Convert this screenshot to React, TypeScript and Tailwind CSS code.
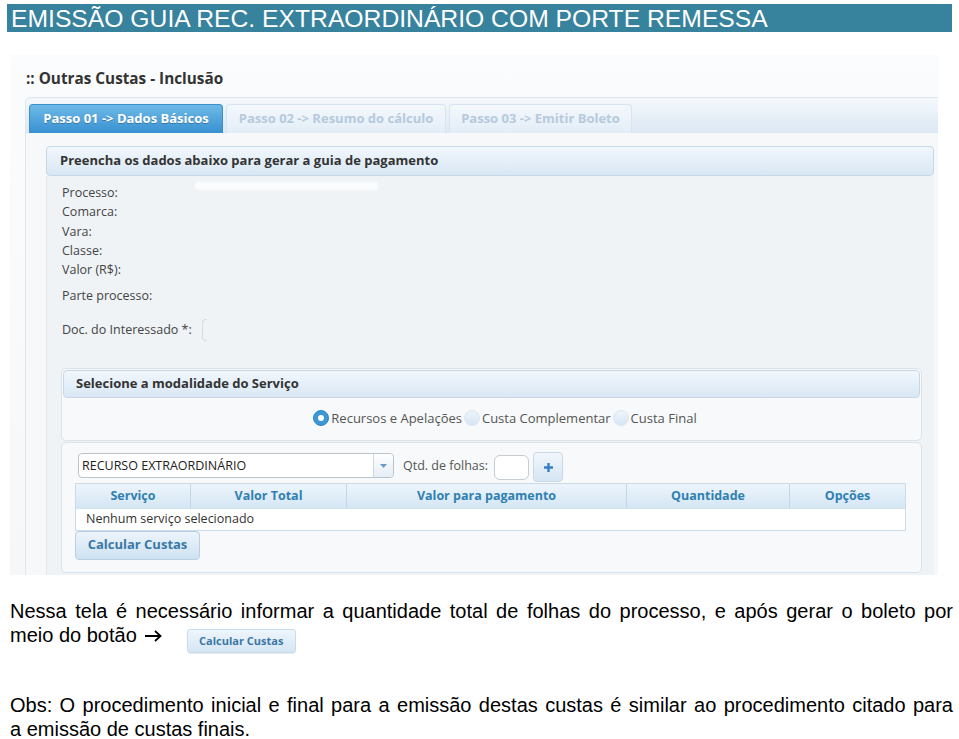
import React from "react";

const labels = ["Comarca:", "Vara:", "Classe:", "Valor (R$):"];

function Radio({ checked, label }: { checked?: boolean; label: string }) {
  return (
    <label className="flex items-center">
      {checked ? (
        <span className="w-[16px] h-[16px] rounded-full bg-[#3c97d6] flex items-center justify-center border border-[#2f86c6]">
          <span className="w-[6px] h-[6px] rounded-full bg-white" />
        </span>
      ) : (
        <span className="w-[16px] h-[16px] rounded-full bg-gradient-to-b from-[#eef5fb] to-[#d6e6f4] border border-[#dde8f1]" />
      )}
      <span className="ml-[2px] mr-[2px] text-[13px] text-[#555]">{label}</span>
    </label>
  );
}

export default function App() {
  return (
    <div className="w-[959px] h-[739px] overflow-hidden bg-white font-['Liberation_Sans',Arial,sans-serif]">
      <div className="mx-[7px] mt-[4px] h-[28px] bg-[#37829c] pl-[4px] text-white text-[24.7px] leading-[29px] whitespace-nowrap">
        EMISSÃO GUIA REC. EXTRAORDINÁRIO COM PORTE REMESSA
      </div>

      {/* captura da tela do sistema */}
      <div className="ml-[10px] mt-[23px] w-[928px] h-[520px] flex flex-col bg-gradient-to-b from-[#fbfcfd] to-[#f5f7f9] font-['Open_Sans',sans-serif]">
        <div className="pl-[16px] pt-[14px] h-[42px] text-[15.3px] leading-[18px] font-bold text-[#333]">
          :: Outras Custas - Inclusão
        </div>

        <div className="ml-[15px] flex-1 flex flex-col border-l border-[#dfe5ea] rounded-tl-[5px]">
          <div className="h-[36px] border-t border-[#dfe5ea] rounded-tl-[5px] bg-gradient-to-b from-[#f4f8fc] to-[#dce8f4] flex items-end pl-[3px] gap-[3px]">
            <div className="w-[194px] h-[29px] rounded-t-[4px] bg-gradient-to-b from-[#6cb9e6] to-[#3891d1] border border-[#3a8fcc] border-b-0 flex items-center justify-center text-[13px] font-bold text-white [text-shadow:0_1px_0_rgba(0,0,0,0.25)]">
              Passo 01 -&gt; Dados Básicos
            </div>
            <div className="w-[220px] h-[29px] rounded-t-[4px] bg-gradient-to-b from-[#f4f8fc] to-[#e3edf7] border border-[#d8e4ef] border-b-0 flex items-center justify-center text-[13px] font-bold text-[#b6cadd]">
              Passo 02 -&gt; Resumo do cálculo
            </div>
            <div className="w-[183px] h-[29px] rounded-t-[4px] bg-gradient-to-b from-[#f4f8fc] to-[#e3edf7] border border-[#d8e4ef] border-b-0 flex items-center justify-center text-[13px] font-bold text-[#b6cadd]">
              Passo 03 -&gt; Emitir Boleto
            </div>
          </div>

          <div className="flex-1 flex flex-col pl-[20px] pt-[13px] bg-[#f6f8fa]">
            <div className="w-[888px] h-[30px] rounded-[4px] border border-[#c6d8e8] bg-gradient-to-b from-[#f1f7fd] to-[#d9e7f4] pl-[13px] flex items-center text-[13px] font-bold text-[#333]">
              Preencha os dados abaixo para gerar a guia de pagamento
            </div>

            <div className="w-[888px] flex-1 bg-[#eff3f6] border-l border-[#e0e6eb] text-[12.5px] text-[#444] leading-[19.25px]">
              <div className="pl-[15px] pt-[7px]">
                <div className="flex items-center">
                  <span className="w-[133px]">Processo:</span>
                  <span className="w-[183px] h-[8px] -mt-[14px] bg-[#fbfcfd] rounded-[3px] blur-[1px]" />
                </div>
                {labels.map((l) => (
                  <div key={l}>{l}</div>
                ))}
                <div className="mt-[7px]">Parte processo:</div>
                <div className="mt-[13px] flex items-center h-[22px]">
                  <span>Doc. do Interessado *:</span>
                  <span className="ml-[10px] w-[5px] h-[22px] border-l border-y border-[#d5dce2] rounded-l-[4px]" />
                </div>
              </div>

              <div className="ml-[14px] mt-[27px] w-[861px] h-[73px] rounded-[5px] border border-[#dbe3ea] bg-[#f7f9fa] p-[1px]">
                <div className="h-[28px] rounded-[4px] border border-[#c6d8e8] bg-gradient-to-b from-[#f1f7fd] to-[#d9e7f4] pl-[12px] flex items-center text-[13px] font-bold text-[#333]">
                  Selecione a modalidade do Serviço
                </div>
                <div className="flex justify-center pl-[29px] mt-[11px]">
                  <Radio checked label="Recursos e Apelações" />
                  <Radio label="Custa Complementar" />
                  <Radio label="Custa Final" />
                </div>
              </div>

              <div className="ml-[14px] mt-[1px] w-[861px] h-[131px] rounded-[5px] border border-[#dbe3ea] bg-[#f7f9fa] pl-[13px] pt-[8px]">
                <div className="flex items-center h-[30px]">
                  <div className="ml-[3px] w-[316px] h-[25px] rounded-[4px] border border-[#b9c4cd] bg-white flex">
                    <span className="flex-1 pl-[3px] text-[12.5px] leading-[23px] text-[#222]">RECURSO EXTRAORDINÁRIO</span>
                    <span className="w-[20px] border-l border-[#cfd8df] rounded-r-[4px] bg-gradient-to-b from-[#fdfeff] to-[#e6eef5] flex items-center justify-center">
                      <svg width="7" height="4" viewBox="0 0 7 4">
                        <path d="M0 0 L7 0 L3.5 4 Z" fill="#6a9cc8" />
                      </svg>
                    </span>
                  </div>
                  <span className="ml-[9px] text-[12.5px] text-[#555]">Qtd. de folhas:</span>
                  <span className="ml-[6px] mt-[3px] w-[35px] h-[25px] rounded-[6px] border border-[#c5ccd2] bg-white" />
                  <span className="ml-[4px] mt-[3px] w-[30px] h-[30px] rounded-[4px] border border-[#c8d9e7] bg-gradient-to-b from-[#f1f7fc] to-[#d5e5f3] flex items-center justify-center">
                    <svg width="9" height="9" viewBox="0 0 9 9">
                      <path d="M3.3 0 H5.7 V3.3 H9 V5.7 H5.7 V9 H3.3 V5.7 H0 V3.3 H3.3 Z" fill="#3a7fc2" />
                    </svg>
                  </span>
                </div>

                <div className="mt-[2px] w-[831px] border border-[#cbdbe8] text-[12.5px]">
                  <div className="h-[24px] flex bg-gradient-to-b from-[#edf5fc] to-[#d4e6f4] font-bold text-[#2f80b0]">
                    <div className="w-[115px] flex items-center justify-center border-r border-[#c4d6e5]">Serviço</div>
                    <div className="w-[156px] flex items-center justify-center border-r border-[#c4d6e5]">Valor Total</div>
                    <div className="w-[280px] flex items-center justify-center border-r border-[#c4d6e5]">Valor para pagamento</div>
                    <div className="w-[163px] flex items-center justify-center border-r border-[#c4d6e5]">Quantidade</div>
                    <div className="flex-1 flex items-center justify-center">Opções</div>
                  </div>
                  <div className="h-[22px] bg-white border-t border-[#dbe3ea] pl-[10px] flex items-center text-[#333]">
                    Nenhum serviço selecionado
                  </div>
                </div>

                <button className="w-[125px] h-[29px] rounded-[4px] border border-[#b9cfe2] bg-gradient-to-b from-[#ecf4fb] to-[#cfe2f2] text-[13px] font-bold text-[#3a78a6]">
                  Calcular Custas
                </button>
              </div>
            </div>
          </div>
        </div>
      </div>

      {/* texto explicativo */}
      <div className="ml-[10px] mt-[24px] w-[943px] text-[20px] leading-[24px] text-black">
        <div className="text-justify [text-align-last:justify] whitespace-nowrap">
          Nessa tela é necessário informar a quantidade total de folhas do processo, e após gerar o boleto por
        </div>
        <div className="flex items-start">
          <span>meio do botão</span>
          <svg className="ml-[7px] mt-[7px]" width="18" height="12" viewBox="0 0 18 12">
            <path d="M1 6 H16 M11 1 L16.5 6 L11 11" fill="none" stroke="#000" strokeWidth="1.8" />
          </svg>
          <span className="ml-[25px] mt-[6px] w-[109px] h-[24px] rounded-[3px] border border-[#c9dceb] bg-gradient-to-b from-[#eef5fc] to-[#d5e6f4] flex items-center justify-center font-['Open_Sans',sans-serif] text-[11px] font-bold text-[#3a78a6] shadow-[0_1px_1px_rgba(0,0,0,0.08)]">
            Calcular Custas
          </span>
        </div>
        <div className="mt-[40px] text-justify [text-align-last:justify] whitespace-nowrap">
          Obs: O procedimento inicial e final para a emissão destas custas é similar ao procedimento citado para
        </div>
        <div>a emissão de custas finais.</div>
      </div>
    </div>
  );
}
